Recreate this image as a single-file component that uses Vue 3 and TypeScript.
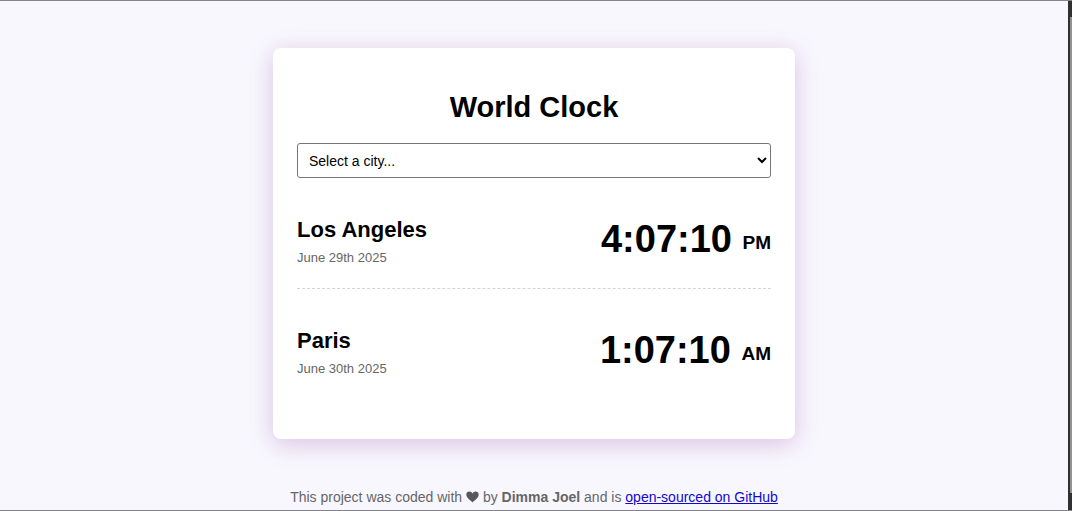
<script setup lang="ts">
import { ref } from 'vue'

interface CityClock {
  name: string
  date: string
  time: string
  period: 'AM' | 'PM'
}

const selected = ref('')

const options: string[] = ['Los Angeles', 'Paris']

const clocks: CityClock[] = [
  { name: 'Los Angeles', date: 'June 29th 2025', time: '4:07:10', period: 'PM' },
  { name: 'Paris', date: 'June 30th 2025', time: '1:07:10', period: 'AM' },
]
</script>

<template>
  <div class="window">
    <div class="page">
      <main class="card">
        <h1>World Clock</h1>
        <select v-model="selected" class="city-select" aria-label="Select a city">
          <option value="">Select a city...</option>
          <option v-for="city in options" :key="city" :value="city">{{ city }}</option>
        </select>
        <section v-for="clock in clocks" :key="clock.name" class="city">
          <div>
            <h2>{{ clock.name }}</h2>
            <div class="date">{{ clock.date }}</div>
          </div>
          <div class="time">{{ clock.time }} <small>{{ clock.period }}</small></div>
        </section>
      </main>
      <footer>
        This project was coded with
        <svg class="heart" viewBox="0 0 13 12" role="img" aria-label="love">
          <path d="M6.5 11.5C5.6 10.2 0.3 7.4 0.3 3.6C0.3 1.7 1.6 0.5 3.3 0.5C4.8 0.5 6 1.3 6.5 2.6C7 1.3 8.2 0.5 9.7 0.5C11.4 0.5 12.7 1.7 12.7 3.6C12.7 7.4 7.4 10.2 6.5 11.5Z" />
        </svg>
        by <strong>Dimma Joel</strong> and is
        <a href="#">open-sourced on GitHub</a>
      </footer>
    </div>
    <div class="edge" aria-hidden="true"><div class="track"></div></div>
  </div>
</template>

<style>
body {
  background: #f8f7fe;
}
</style>

<style scoped>
.window {
  display: flex;
  box-sizing: border-box;
  min-height: 100vh;
  border-top: 1px solid #85828a;
  border-bottom: 1px solid #85828a;
  background: #f8f7fe;
  color: #000;
  font-family: "Liberation Sans", Arial, sans-serif;
}

.page {
  flex: 1;
  padding: 47px 24px 0;
}

.card {
  box-sizing: border-box;
  max-width: 522px;
  margin: 0 auto;
  padding: 41px 24px 40px;
  border-radius: 8px;
  background: #fff;
  box-shadow: 0 5px 24px rgba(120, 20, 130, 0.23);
}

h1 {
  margin: 0 0 17px;
  font-size: 29px;
  line-height: 37px;
  text-align: center;
}

.city-select {
  display: block;
  width: 100%;
  height: 35px;
  padding: 0 0 0 7px;
  border: 1px solid #767676;
  border-radius: 3px;
  background: #fff;
  color: #000;
  font-family: inherit;
  font-size: 14px;
}

.city {
  display: flex;
  align-items: center;
  justify-content: space-between;
  padding: 36px 0 19px;
  border-bottom: 1px dashed #d4d4d4;
}

.city:last-child {
  border-bottom: 0;
}

h2 {
  margin: 0;
  font-size: 22px;
  line-height: 32px;
}

.date {
  color: #666;
  font-size: 13px;
  line-height: 23px;
}

.time {
  padding-bottom: 6px;
  font-size: 38px;
  font-weight: bold;
  line-height: 46px;
}

.time small {
  font-size: 19px;
  line-height: 1;
  vertical-align: 3px;
}

footer {
  margin-top: 48px;
  color: #666;
  font-size: 14px;
  line-height: 20px;
  text-align: center;
}

.heart {
  width: 13px;
  height: 12px;
  vertical-align: -1px;
  fill: #58585c;
}

a {
  color: #1108d0;
}

.edge {
  box-sizing: border-box;
  display: flex;
  width: 4px;
  padding: 16px 0 17px 2px;
  background: #303030;
}

.track {
  flex: 1;
  background: #929292;
}
</style>
